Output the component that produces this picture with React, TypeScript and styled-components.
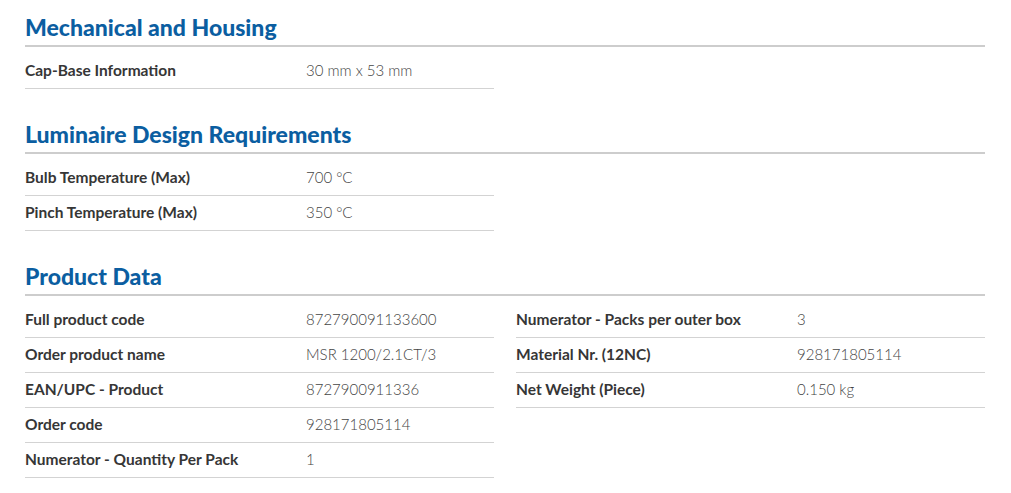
import styled, { createGlobalStyle } from 'styled-components';

const GlobalStyle = createGlobalStyle`
  body {
    margin: 0;
    background: #ffffff;
    font-family: Lato, "Open Sans", sans-serif;
  }
`;

type Spec = { label: string; value: string };

interface SectionData {
  title: string;
  columns: Spec[][];
}

const sections: SectionData[] = [
  {
    title: 'Mechanical and Housing',
    columns: [[{ label: 'Cap-Base Information', value: '30 mm x 53 mm' }]],
  },
  {
    title: 'Luminaire Design Requirements',
    columns: [
      [
        { label: 'Bulb Temperature (Max)', value: '700 °C' },
        { label: 'Pinch Temperature (Max)', value: '350 °C' },
      ],
    ],
  },
  {
    title: 'Product Data',
    columns: [
      [
        { label: 'Full product code', value: '872790091133600' },
        { label: 'Order product name', value: 'MSR 1200/2.1CT/3' },
        { label: 'EAN/UPC - Product', value: '8727900911336' },
        { label: 'Order code', value: '928171805114' },
        { label: 'Numerator - Quantity Per Pack', value: '1' },
      ],
      [
        { label: 'Numerator - Packs per outer box', value: '3' },
        { label: 'Material Nr. (12NC)', value: '928171805114' },
        { label: 'Net Weight (Piece)', value: '0.150 kg' },
      ],
    ],
  },
];

const Page = styled.div`
  padding: 12px 26px 0 25px;
  display: flex;
  flex-direction: column;
  gap: 30px;
`;

const Section = styled.section`
  display: flex;
  flex-direction: column;
`;

const Heading = styled.h2`
  margin: 0;
  font-size: 23px;
  line-height: 30px;
  font-weight: 900;
  color: #0b5ea1;
  padding-bottom: 3px;
  border-bottom: 2px solid #cdcdcd;
`;

const Columns = styled.div`
  display: grid;
  grid-template-columns: 1fr 1fr;
  column-gap: 22px;
  padding-top: 7px;
`;

const List = styled.div`
  display: flex;
  flex-direction: column;
`;

const Row = styled.div`
  display: grid;
  grid-template-columns: 281px 1fr;
  align-items: center;
  height: 35px;
  padding-bottom: 2px;
  box-sizing: border-box;
  border-bottom: 1px solid #d3d3d3;
`;

const Label = styled.span`
  font-size: 15.5px;
  font-weight: 700;
  color: #363636;
`;

const Value = styled.span`
  font-size: 15px;
  font-weight: 300;
  color: #444444;
`;

export default function App() {
  return (
    <>
      <GlobalStyle />
      <Page>
        {sections.map((s) => (
          <Section key={s.title}>
            <Heading>{s.title}</Heading>
            <Columns>
              {s.columns.map((col, i) => (
                <List key={i}>
                  {col.map((r) => (
                    <Row key={r.label}>
                      <Label>{r.label}</Label>
                      <Value>{r.value}</Value>
                    </Row>
                  ))}
                </List>
              ))}
            </Columns>
          </Section>
        ))}
      </Page>
    </>
  );
}
